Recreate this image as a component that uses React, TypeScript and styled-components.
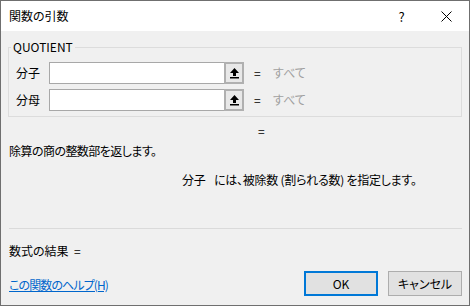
import React from 'react';
import styled, { createGlobalStyle } from 'styled-components';

const GlobalStyle = createGlobalStyle`
    html, body {
        margin: 0;
        padding: 0;
        background: #ffffff;
    }
    body {
        font-family: "Noto Sans CJK JP", "Noto Sans", sans-serif;
        font-size: 12px;
        font-feature-settings: "palt";
        color: #000;
    }
`;

const Window = styled.div`
    width: 470px;
    height: 306px;
    box-sizing: border-box;
    border: 1px solid #6f6f6f;
    display: flex;
    flex-direction: column;
    background: #f0f0f0;
`;

const TitleBar = styled.div`
    height: 30px;
    flex: none;
    background: #ffffff;
    display: flex;
    align-items: center;
`;

const Title = styled.div`
    flex: 1;
    padding-left: 8px;
    font-size: 12px;
    line-height: 16px;
`;

const CaptionButton = styled.div`
    width: 45px;
    height: 30px;
    display: flex;
    align-items: center;
    justify-content: center;
    font-size: 13px;
    color: #000;
`;

const Body = styled.div`
    flex: 1;
    padding: 0 7px 0 7px;
    display: flex;
    flex-direction: column;
`;

const Group = styled.fieldset`
    margin: 8px 0 0 0;
    padding: 7px 0 5px 0;
    border: 1px solid #dcdcdc;
    display: flex;
    flex-direction: column;
    gap: 5px;
`;

const Legend = styled.legend`
    margin-left: 2px;
    padding: 0 2px;
    line-height: 16px;
    font-size: 12px;
`;

const ArgRow = styled.div`
    display: flex;
    align-items: center;
    height: 22px;
`;

const ArgLabel = styled.div`
    width: 33px;
    padding-left: 7px;
    line-height: 16px;
`;

const InputBox = styled.div`
    width: 175px;
    height: 22px;
    box-sizing: border-box;
    background: #ffffff;
    border: 1px solid #a8a8a8;
    border-right: none;
`;

const RefButton = styled.div`
    width: 20px;
    height: 22px;
    box-sizing: border-box;
    background: #e8e8e8;
    border: 2px solid #b0b0b0;
    display: flex;
    align-items: center;
    justify-content: center;
`;

const Equals = styled.div`
    margin-left: 10px;
    width: 19px;
    line-height: 16px;
`;

const Value = styled.div<{ $muted?: boolean }>`
    color: ${p => (p.$muted ? '#a0a0a0' : '#000')};
    line-height: 16px;
`;

const Line = styled.div<{ $top: number; $indent?: number; $tight?: number }>`
    margin-top: ${p => p.$top}px;
    padding-left: ${p => p.$indent ?? 1}px;
    letter-spacing: ${p => p.$tight ?? 0}px;
    line-height: 16px;
    height: 16px;
    display: flex;
    white-space: pre;
`;

const ArgName = styled.span`
    width: 32px;
`;

const Separator = styled.hr`
    margin: 40px 0 0 1px;
    border: none;
    border-top: 1px solid #dadada;
    height: 0;
`;

const Footer = styled.div`
    margin-top: 12px;
    display: flex;
    align-items: center;
    padding-left: 1px;
`;

const HelpLink = styled.a`
    flex: 1;
    color: #0066cc;
    text-decoration: underline;
    letter-spacing: -0.9px;
    line-height: 16px;
    margin-top: 3px;
    cursor: pointer;
`;

const Button = styled.button<{ $primary?: boolean }>`
    width: 74px;
    height: 25px;
    box-sizing: border-box;
    margin-left: 10px;
    background: #e1e1e1;
    border: ${p => (p.$primary ? '2px solid #0078d7' : '1px solid #adadad')};
    font-family: inherit;
    font-size: 12px;
    font-feature-settings: "palt";
    color: #000;
    padding: 0;
`;

const UpArrow = () => (
    <svg width="9" height="11" viewBox="0 0 9 11">
        <polygon points="4.5,0 9,5 6,5 6,8 3,8 3,5 0,5" fill="#000" />
        <rect x="0" y="9" width="9" height="1.5" fill="#000" />
    </svg>
);

const CloseIcon = () => (
    <svg width="11" height="11" viewBox="0 0 11 11">
        <path d="M0.5 0.5 L10.5 10.5 M10.5 0.5 L0.5 10.5" stroke="#000" strokeWidth="1" />
    </svg>
);

const args = ['分子', '分母'];

const App: React.FC = () => {
    return (
        <>
            <GlobalStyle />
            <Window>
                <TitleBar>
                    <Title>関数の引数</Title>
                    <CaptionButton>?</CaptionButton>
                    <CaptionButton>
                        <CloseIcon />
                    </CaptionButton>
                </TitleBar>
                <Body>
                    <Group>
                        <Legend>QUOTIENT</Legend>
                        {args.map(name => (
                            <ArgRow key={name}>
                                <ArgLabel>{name}</ArgLabel>
                                <InputBox />
                                <RefButton>
                                    <UpArrow />
                                </RefButton>
                                <Equals>=</Equals>
                                <Value $muted>すべて</Value>
                            </ArgRow>
                        ))}
                    </Group>
                    <Line $top={6} $indent={250}>=</Line>
                    <Line $top={4} $tight={-0.55}>除算の商の整数部を返します。</Line>
                    <Line $top={13} $indent={174} $tight={-0.25}>
                        <ArgName>分子</ArgName>
                        <span>には、被除数 (割られる数) を指定します。</span>
                    </Line>
                    <Separator />
                    <Line $top={14}>数式の結果  =</Line>
                    <Footer>
                        <HelpLink>この関数のヘルプ(H)</HelpLink>
                        <Button $primary>OK</Button>
                        <Button>キャンセル</Button>
                    </Footer>
                </Body>
            </Window>
        </>
    );
};

export default App;
